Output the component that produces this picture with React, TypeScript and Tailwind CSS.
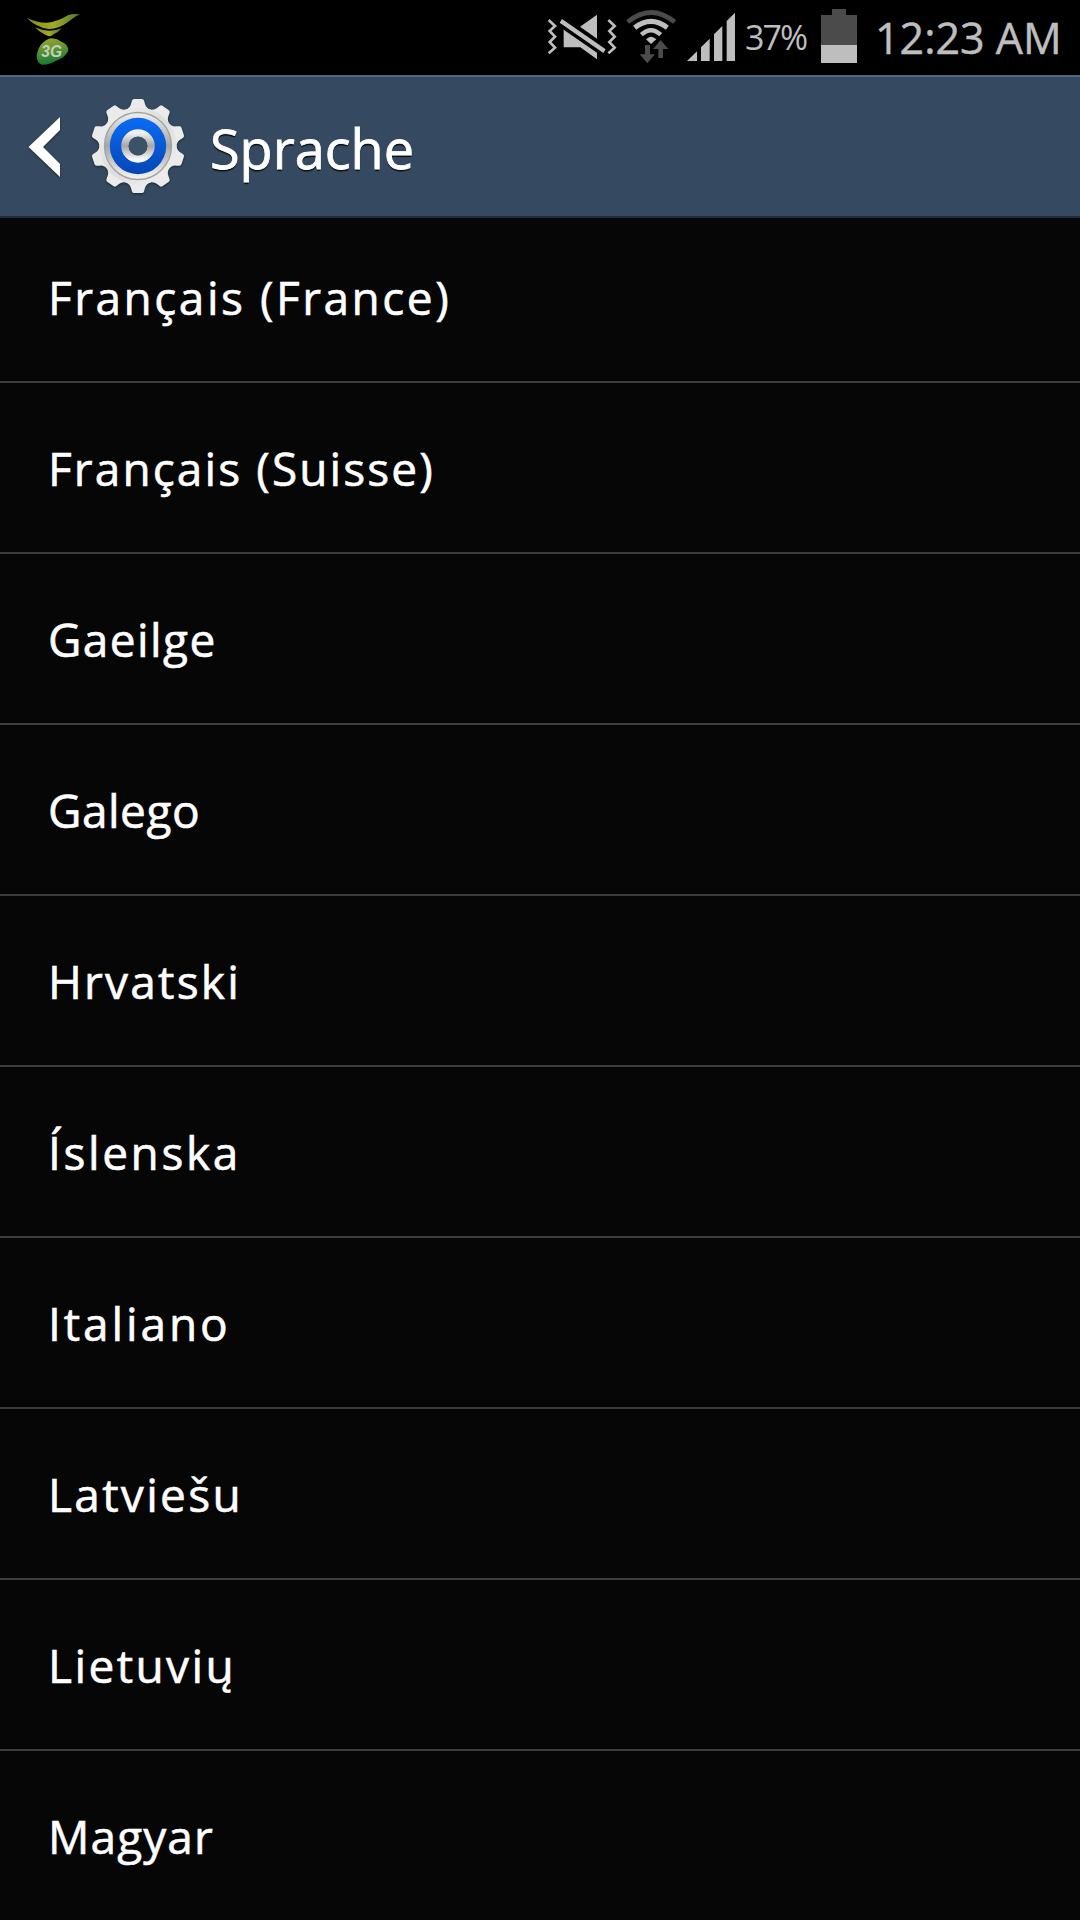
import React from 'react';
import { clsx } from 'clsx';

interface Language {
  name: string;
  spacing: string;
}

const LANGUAGES: Language[] = [
  { name: 'Français (France)', spacing: 'tracking-[2.5px]' },
  { name: 'Français (Suisse)', spacing: 'tracking-[2.1px]' },
  { name: 'Gaeilge', spacing: 'tracking-[1.4px]' },
  { name: 'Galego', spacing: 'tracking-[0.5px]' },
  { name: 'Hrvatski', spacing: 'tracking-[2.2px]' },
  { name: 'Íslenska', spacing: 'tracking-[2.6px]' },
  { name: 'Italiano', spacing: 'tracking-[2.9px]' },
  { name: 'Latviešu', spacing: 'tracking-[2.3px]' },
  { name: 'Lietuvių', spacing: 'tracking-[2.4px]' },
  { name: 'Magyar', spacing: 'tracking-[1.1px]' },
];

const GEAR_TEETH = [0, 36, 72, 108, 144, 180, 216, 252, 288, 324];

const CarrierIcon = () => (
  <svg className="w-[54px] h-[75px]" viewBox="78 0 162 225">
    <defs>
      <linearGradient id="leaf" x1="0" y1="0" x2="1" y2="0">
        <stop offset="0" stopColor="#7f8f1c" />
        <stop offset="0.5" stopColor="#a3ab22" />
        <stop offset="1" stopColor="#4d7a2c" />
      </linearGradient>
      <linearGradient id="drop" x1="0.4" y1="0" x2="0.6" y2="1">
        <stop offset="0" stopColor="#93a52a" />
        <stop offset="0.5" stopColor="#4f9030" />
        <stop offset="1" stopColor="#0d7434" />
      </linearGradient>
    </defs>
    <path d="M80 53 Q110 68 140 68 Q172 66 205 45 Q222 40 239 43 Q222 51 207 64 Q176 88 146 87 Q108 82 80 53Z" fill="url(#leaf)" />
    <path d="M105 82 Q146 101 185 85 Q174 98 163 101 Q154 109 146 109 Q135 104 128 100 Q115 93 105 82Z" fill="url(#leaf)" />
    <path d="M155 115 Q172 116 186 126 Q205 134 205 152 Q194 174 168 182 Q145 196 125 194 Q111 189 110 168 Q114 140 130 127 Q144 115 155 115Z" fill="url(#drop)" />
    <text x="124" y="170" textLength="62" lengthAdjust="spacingAndGlyphs" fontFamily="Liberation Sans, sans-serif" fontSize="48" fontWeight="700" fontStyle="italic" fill="#c5cdbf">
      3G
    </text>
  </svg>
);

const MuteIcon = () => (
  <svg className="w-[71px] h-[75px]" viewBox="51 0 213 225" fill="#bebebe">
    <path d="M150 80 L201 44 V116Z" />
    <path d="M101 89 L201 158 V178 L151 142 H101Z" />
    <path d="M96 57 L227 148 L220 159 L89 68Z" />
    <g fill="none" stroke="#bebebe" strokeWidth="8">
      <path d="M56 60 L75 78 L59 93 L75 110 L59 126 L75 143 L56 160" />
      <path d="M235 60 L254 78 L238 93 L254 110 L238 126 L254 143 L235 160" />
    </g>
  </svg>
);

const WifiIcon = () => (
  <svg className="w-[50px] h-[75px]" viewBox="288 0 150 225" fill="none" strokeWidth="14">
    <path d="M293 66 Q363 9 434 66" stroke="#4b4b4b" />
    <path d="M314 83 Q363 45 412 83" stroke="#bebebe" strokeWidth="15" />
    <path d="M334 104 Q363 77 392 104" stroke="#bebebe" strokeWidth="13" />
    <path d="M348 118 Q363 103 379 118 L363 132Z" fill="#bebebe" />
    <path d="M345 135 H360 V163 H375 L352 190 L329 163 H345Z" fill="#4b4b4b" />
    <path d="M385 174 H399 V147 H415 L392 120 L369 147 H385Z" fill="#4b4b4b" />
  </svg>
);

const SignalIcon = () => (
  <svg className="w-[49px] h-[75px]" viewBox="471 0 147 225" fill="#bebebe">
    <path d="M471 183 L501 154 V183Z" />
    <path d="M513 183 V142 L539 116 V183Z" />
    <path d="M552 183 V103 L577 78 V183Z" />
    <path d="M590 183 V63 L615 38 V183Z" />
  </svg>
);

const BatteryIcon = () => (
  <svg className="w-9 h-[75px]" viewBox="0 0 36 75">
    <path d="M11 9 H25 V15 H36 V45 H0 V15 H11Z" fill="#4b4b4b" />
    <rect y="45" width="36" height="18" fill="#bebebe" />
  </svg>
);

const SettingsIcon = () => (
  <svg className="w-24 h-[100px] mb-px drop-shadow-[0_1px_1px_rgba(0,0,0,0.5)]" viewBox="-48 -50 96 100">
    <defs>
      <linearGradient id="metal" x1="0" y1="0" x2="1" y2="1">
        <stop offset="0" stopColor="#f4f4f4" />
        <stop offset="0.5" stopColor="#dcdcdc" />
        <stop offset="1" stopColor="#f4f4f4" />
      </linearGradient>
      <linearGradient id="rim" x1="0" y1="0" x2="0" y2="1">
        <stop offset="0" stopColor="#f0f0f0" />
        <stop offset="0.5" stopColor="#a6a6a6" />
        <stop offset="1" stopColor="#f6f6f6" />
      </linearGradient>
      <linearGradient id="blue" x1="0" y1="0" x2="0" y2="1">
        <stop offset="0" stopColor="#0a6cf4" />
        <stop offset="1" stopColor="#0546b4" />
      </linearGradient>
    </defs>
    <g fill="#ebebeb">
      {GEAR_TEETH.map((angle) => (
        <path key={angle} d="M-13 -36 Q-8 -38 -7 -42 L-6 -45.500 Q-5.500 -47 -4 -47 H4 Q5.500 -47 6 -45.500 L7 -42 Q8 -38 13 -36Z" transform={`rotate(${angle})`} />
      ))}
    </g>
    <circle r="38.500" fill="url(#metal)" />
    <circle r="33.500" fill="url(#rim)" stroke="#a2a2a2" strokeWidth="1.300" />
    <circle r="28.200" fill="url(#blue)" />
    <circle r="13" fill="none" stroke="url(#rim)" strokeWidth="7.500" />
    <circle r="9.500" fill="#3c5266" />
  </svg>
);

const StatusBar = () => (
  <div className="h-[75px] bg-black flex items-center justify-between pl-[26px] text-[#bebebe]">
    <CarrierIcon />
    <div className="flex items-center h-[75px]">
      <MuteIcon />
      <div className="w-2" />
      <WifiIcon />
      <div className="w-[11px]" />
      <SignalIcon />
      <div className="w-[85px] pl-[9px] text-[34px] leading-[77px] tracking-[-2px]">37%</div>
      <BatteryIcon />
      <div className="w-[223px] pl-[18px] text-[43px] leading-[72px] whitespace-nowrap [-webkit-text-stroke:0.5px]">12:23 AM</div>
    </div>
  </div>
);

const Header = () => (
  <header className="h-[143px] bg-[#354a60] border-t-2 border-t-[#4c6a84] border-b-2 border-b-[#1d2d3d] flex items-center pl-7 text-white">
    <svg className="w-8 h-[62px] drop-shadow-[0_1px_1px_rgba(0,0,0,0.5)]" viewBox="0 0 32 62" fill="#ffffff">
      <path d="M0.500 31 L32 1 V14 L15 31 L32 48 V61Z" />
    </svg>
    <div className="w-[30px]" />
    <SettingsIcon />
    <h1 className="pl-6 pt-0.5 text-[54px] leading-[140px] text-shadow-[0_2px_1px_rgba(0,0,0,0.8)] [-webkit-text-stroke:0.8px]">Sprache</h1>
  </header>
);

const App: React.FC = () => {
  return (
    <div className="w-[1080px] h-[1920px] bg-[#060606] overflow-hidden flex flex-col font-['Open_Sans','Noto_Sans',sans-serif]">
      <StatusBar />
      <Header />

      {/* Language list, scrolled a little under the header */}
      <ul className="flex-1 min-h-0 overflow-hidden text-white">
        {LANGUAGES.map((language, index) => (
          <li
            key={language.name}
            className={clsx(
              'flex items-center pl-12 border-b-2 border-[#3c3c3c] text-[46px] leading-none whitespace-nowrap [-webkit-text-stroke:0.6px]',
              index === 0 ? 'h-[165px] pb-1.5' : 'h-[171px]',
              language.spacing,
            )}
          >
            {language.name}
          </li>
        ))}
      </ul>
    </div>
  );
};

export default App;
